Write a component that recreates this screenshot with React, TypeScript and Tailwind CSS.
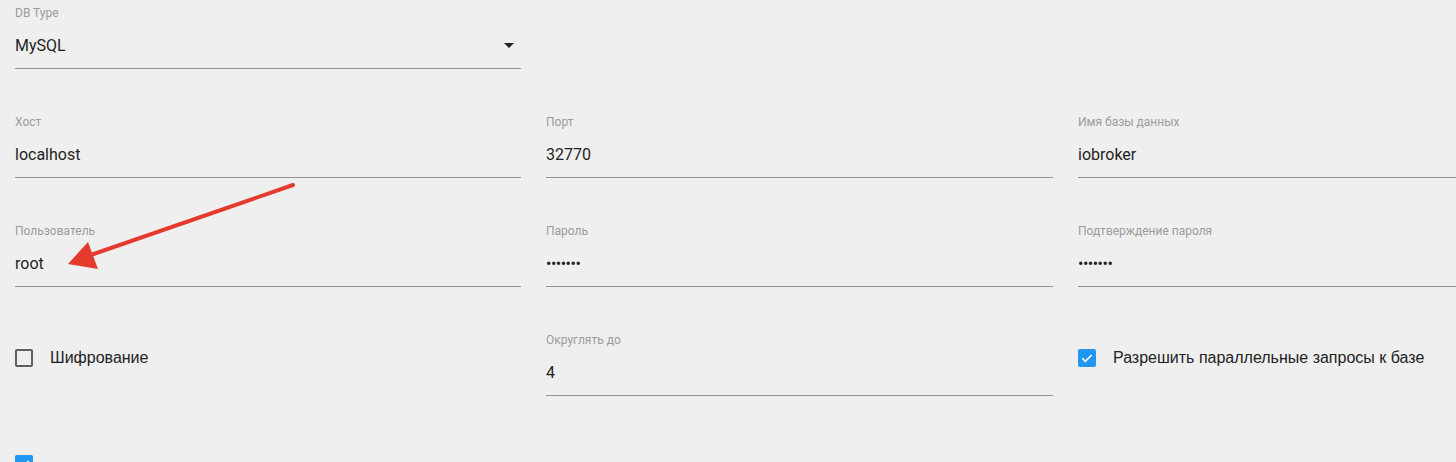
import type { ReactNode } from "react";

type FieldProps = {
    label: string;
    value: string;
    select?: boolean;
    password?: boolean;
};

function Field({ label, value, select, password }: FieldProps) {
    return (
        <div className="relative h-[69px] border-b border-[#949494] pt-[5px]">
            <div className="h-4 text-[12px] leading-4 text-[#9b9b9b]">{label}</div>
            <div
                className={
                    password
                        ? "mt-[15px] h-5 text-[16px] leading-5 tracking-[-0.5px] text-[#1f1f1f]"
                        : "mt-[15px] h-5 text-[16px] leading-5 text-[#1f1f1f]"
                }
            >
                {value}
            </div>
            {select ? (
                <svg
                    viewBox="0 0 24 24"
                    className="absolute right-[0px] top-[33px] h-6 w-6 fill-[#222]"
                >
                    <path d="M7 10l5 5 5-5z" />
                </svg>
            ) : null}
        </div>
    );
}

function CheckBox({ label, checked }: { label: string; checked?: boolean }) {
    return (
        <div className="flex items-center pt-[21px]">
            {checked ? (
                <div className="flex h-[18px] w-[18px] items-center justify-center rounded-[2px] bg-[#2196f3]">
                    <svg viewBox="0 0 24 24" className="h-[16px] w-[16px]">
                        <path
                            d="M5 12.5l4.5 4.5L19 7.5"
                            fill="none"
                            stroke="white"
                            strokeWidth="2.6"
                        />
                    </svg>
                </div>
            ) : (
                <div className="h-[18px] w-[18px] rounded-[2px] border-2 border-[#5f5f5f]" />
            )}
            {label ? (
                <span className="ml-[17px] font-['Liberation_Sans',Arial,sans-serif] text-[16px] leading-5 text-[#222]">
                    {label}
                </span>
            ) : null}
        </div>
    );
}

function Cell({ children }: { children?: ReactNode }) {
    return <div className="h-[109px]">{children}</div>;
}

export default function App() {
    return (
        <div className="relative h-[462px] w-[1456px] overflow-hidden bg-[#efefef] font-['Roboto',sans-serif]">
            <div className="grid w-[1600px] grid-cols-[506px_507px_507px] gap-x-[25px] pl-[15px]">
                {/* DB type */}
                <Cell>
                    <Field label="DB Type" value="MySQL" select />
                </Cell>
                <Cell />
                <Cell />

                {/* Подключение */}
                <Cell>
                    <Field label="Хост" value="localhost" />
                </Cell>
                <Cell>
                    <Field label="Порт" value="32770" />
                </Cell>
                <Cell>
                    <Field label="Имя базы данных" value="iobroker" />
                </Cell>

                <Cell>
                    <Field label="Пользователь" value="root" />
                </Cell>
                <Cell>
                    <Field label="Пароль" value="•••••••" password />
                </Cell>
                <Cell>
                    <Field label="Подтверждение пароля" value="•••••••" password />
                </Cell>

                <Cell>
                    <CheckBox label="Шифрование" />
                </Cell>
                <Cell>
                    <Field label="Округлять до" value="4" />
                </Cell>
                <Cell>
                    <CheckBox label="Разрешить параллельные запросы к базе" checked />
                </Cell>

                <div className="-mt-[2px]">
                    <CheckBox label="" checked />
                </div>
            </div>

            {/* annotation arrow */}
            <svg className="pointer-events-none absolute left-0 top-0" width="320" height="290">
                <line x1="293" y1="185" x2="88" y2="256" stroke="#e53b2f" strokeWidth="4" strokeLinecap="round" />
                <polygon points="68,264 88,242 98,269" fill="#e53b2f" />
            </svg>
        </div>
    );
}
